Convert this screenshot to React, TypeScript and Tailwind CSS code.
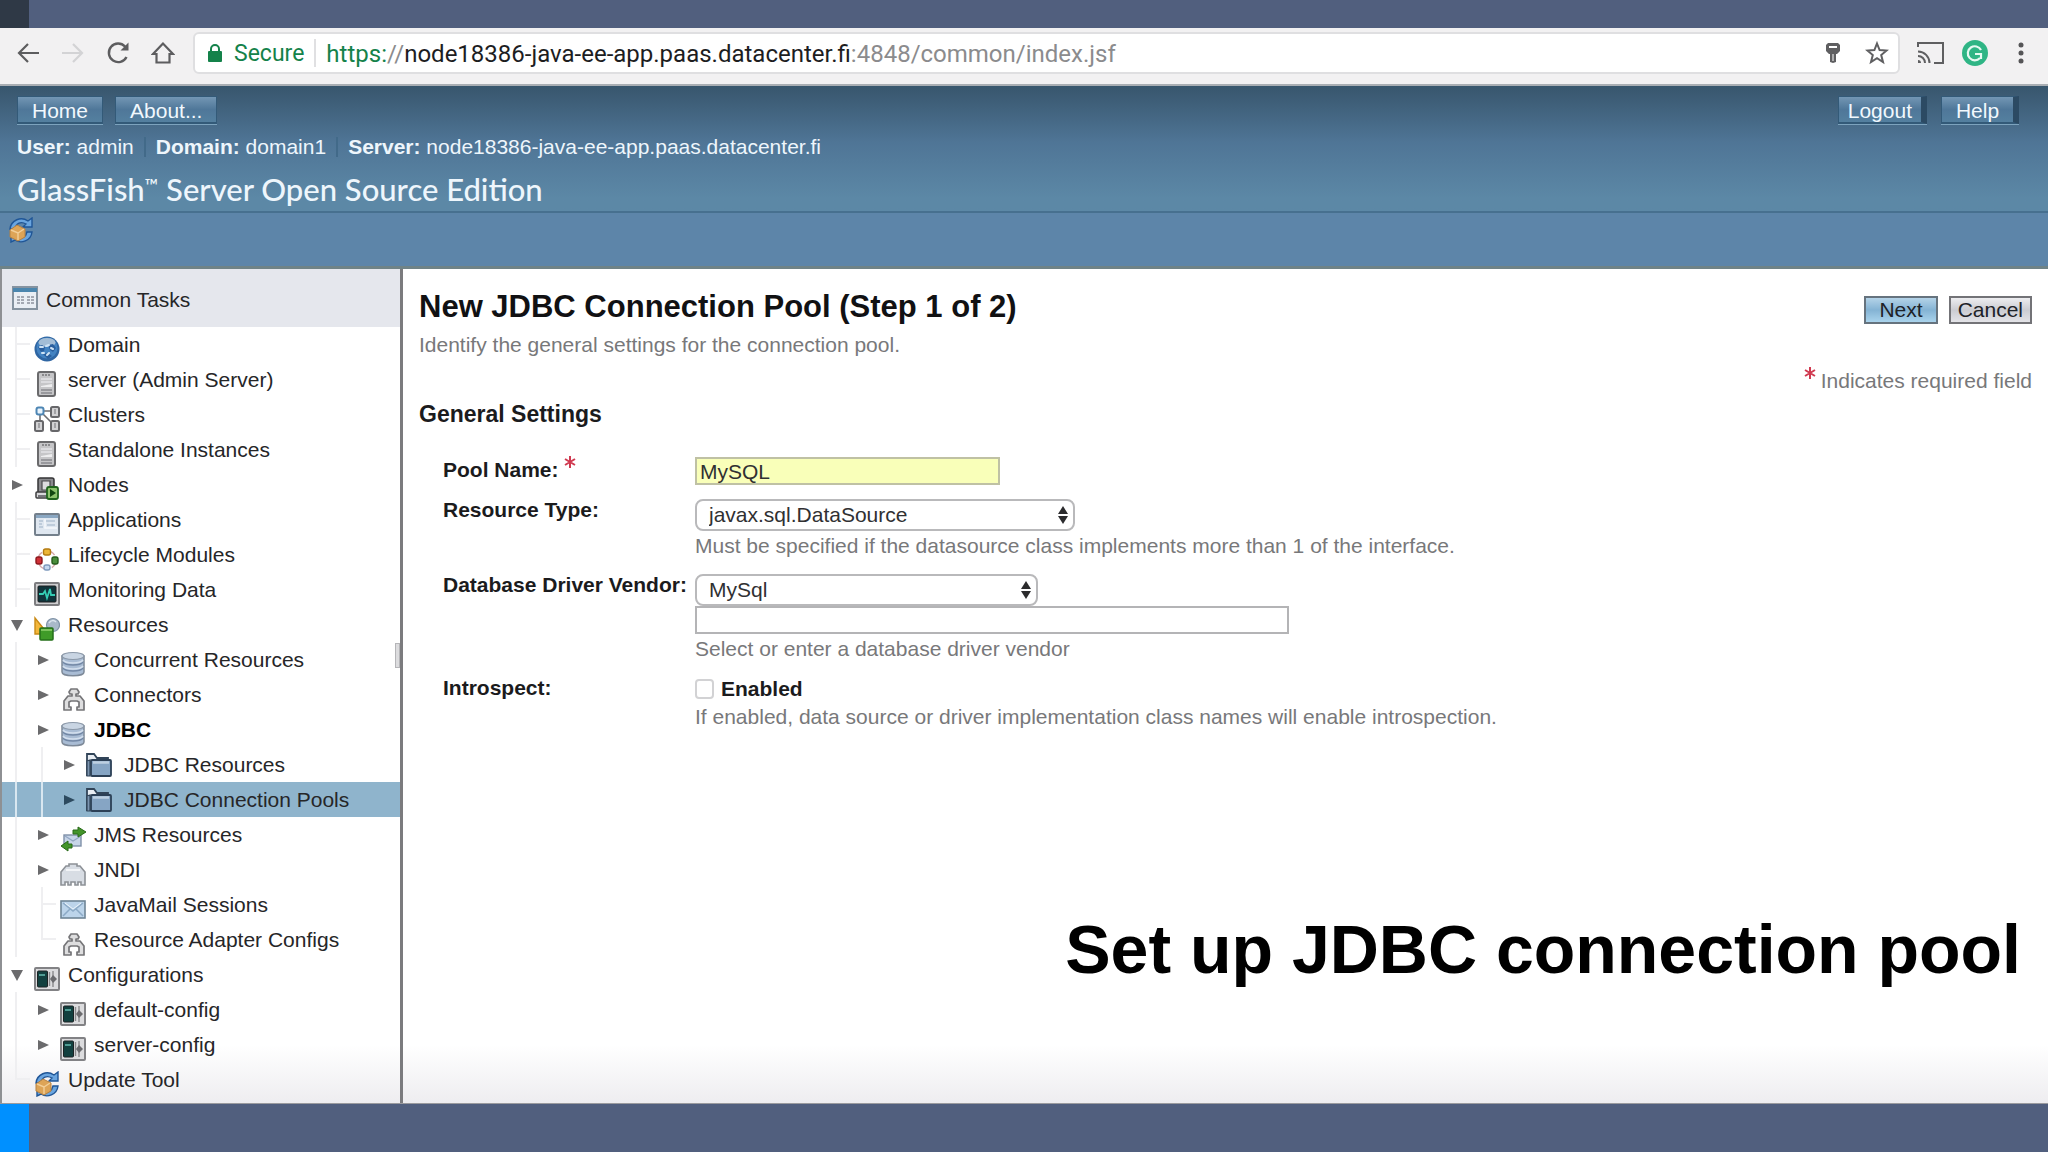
import type { ReactNode } from "react";

type IconName =
  | "globe"
  | "server"
  | "cluster"
  | "node"
  | "app"
  | "lifecycle"
  | "monitor"
  | "resources"
  | "database"
  | "connector"
  | "folder"
  | "jms"
  | "jndi"
  | "mail"
  | "config"
  | "update";

type TreeItem = {
  label: string;
  icon: IconName;
  level: 0 | 1 | 2;
  branch: "open" | "closed" | "tee" | "end";
  bold?: boolean;
  selected?: boolean;
};

const treeItems: TreeItem[] = [
  { label: "Domain", icon: "globe", level: 0, branch: "tee" },
  { label: "server (Admin Server)", icon: "server", level: 0, branch: "tee" },
  { label: "Clusters", icon: "cluster", level: 0, branch: "tee" },
  { label: "Standalone Instances", icon: "server", level: 0, branch: "tee" },
  { label: "Nodes", icon: "node", level: 0, branch: "closed" },
  { label: "Applications", icon: "app", level: 0, branch: "tee" },
  { label: "Lifecycle Modules", icon: "lifecycle", level: 0, branch: "tee" },
  { label: "Monitoring Data", icon: "monitor", level: 0, branch: "tee" },
  { label: "Resources", icon: "resources", level: 0, branch: "open" },
  { label: "Concurrent Resources", icon: "database", level: 1, branch: "closed" },
  { label: "Connectors", icon: "connector", level: 1, branch: "closed" },
  { label: "JDBC", icon: "database", level: 1, branch: "closed", bold: true },
  { label: "JDBC Resources", icon: "folder", level: 2, branch: "closed" },
  { label: "JDBC Connection Pools", icon: "folder", level: 2, branch: "closed", selected: true },
  { label: "JMS Resources", icon: "jms", level: 1, branch: "closed" },
  { label: "JNDI", icon: "jndi", level: 1, branch: "closed" },
  { label: "JavaMail Sessions", icon: "mail", level: 1, branch: "tee" },
  { label: "Resource Adapter Configs", icon: "connector", level: 1, branch: "end" },
  { label: "Configurations", icon: "config", level: 0, branch: "open" },
  { label: "default-config", icon: "config", level: 1, branch: "closed" },
  { label: "server-config", icon: "config", level: 1, branch: "closed" },
  { label: "Update Tool", icon: "update", level: 0, branch: "end" },
];

const drawings: Record<IconName, ReactNode> = {
  globe: (
    <>
      <circle cx="13" cy="13" r="12.5" fill="#2f66a3" />
      <circle cx="13" cy="12" r="10.5" fill="#4383c2" />
      <ellipse cx="13" cy="6.5" rx="8.5" ry="4.5" fill="#a3bdd6" />
      <path d="M4 11l4-2 3 2-1 4-3 1zM14 9l5-1 3 4-3 4-3-2zM9 18l5-1 4 3-4 3z" fill="#2a5f9e" />
      <path d="M6 11h3M12 10l3-1M17 12l2 1M8 17h2M15 17l-2 2" stroke="#cfe3f5" strokeWidth="2" strokeLinecap="round" fill="none" />
    </>
  ),
  server: (
    <>
      <rect x="4" y="1" width="17" height="24" rx="2" fill="#c6c6c8" stroke="#6a6a6c" strokeWidth="2" />
      <path d="M8 4h9" stroke="#77777a" strokeWidth="1.5" strokeDasharray="2 1" />
      <path d="M7 8h11M7 11h11" stroke="#e4e4e6" strokeWidth="1.5" />
      <path d="M7 15l11-2v3H7z" fill="#eeeeef" />
      <path d="M7 19h11M7 22h11" stroke="#8b8b8e" strokeWidth="1.5" />
    </>
  ),
  cluster: (
    <>
      <path d="M6 5h12M6 5v14M6 5l14 14" stroke="#6d6d70" strokeWidth="1.6" fill="none" />
      <rect x="2.5" y="1.5" width="7" height="7" rx="2" fill="#eaf4fc" stroke="#4e86b4" strokeWidth="2" />
      <rect x="17" y="1" width="8" height="10" rx="1.5" fill="#d2d2d4" stroke="#67676a" strokeWidth="2" />
      <rect x="1" y="15" width="8" height="10" rx="1.5" fill="#d2d2d4" stroke="#67676a" strokeWidth="2" />
      <rect x="17" y="15" width="8" height="10" rx="1.5" fill="#d2d2d4" stroke="#67676a" strokeWidth="2" />
      <path d="M21 3v5M5 17v5M21 17v5" stroke="#929295" strokeWidth="1.5" />
    </>
  ),
  node: (
    <>
      <path d="M6 2h12q2 0 2 2v13H4V4q0-2 2-2z" fill="#8b8b8e" stroke="#343436" strokeWidth="1.5" />
      <path d="M8 5h8v9H8z" fill="#dcdcde" stroke="#4a4a4c" strokeWidth="1.2" />
      <rect x="2" y="16" width="14" height="6" rx="1" fill="#d8d8da" stroke="#3c3c3e" strokeWidth="1.5" />
      <path d="M4 20h9" stroke="#55555a" strokeWidth="1.5" />
      <rect x="13" y="11" width="11" height="12" rx="2" fill="#8cc26c" stroke="#20641c" strokeWidth="1.8" />
      <path d="M16 13v8l6-4z" fill="#124710" />
    </>
  ),
  app: (
    <>
      <rect x="1" y="3" width="24" height="21" rx="1" fill="#dfe7f0" stroke="#74808c" strokeWidth="2" />
      <path d="M2 5.5h22" stroke="#8aa7c2" strokeWidth="3" />
      <path d="M5 10h4M5 13h3M5 16h4M12 10h9M13 14h8" stroke="#b4c3d3" strokeWidth="1.5" />
      <path d="M11 8v9h12" stroke="#f6f9fc" strokeWidth="1.5" fill="none" />
    </>
  ),
  lifecycle: (
    <>
      <circle cx="13" cy="14" r="9" fill="none" stroke="#d3a7aa" strokeWidth="1.4" strokeDasharray="9 5" />
      <rect x="9.5" y="3" width="7" height="6" rx="2" fill="#edb637" stroke="#b47b12" strokeWidth="1.4" />
      <rect x="2" y="11" width="6" height="7" rx="2" fill="#cf3036" stroke="#8d171c" strokeWidth="1.4" />
      <rect x="18" y="11" width="6" height="7" rx="2" fill="#4a8e3c" stroke="#245c1c" strokeWidth="1.4" />
      <rect x="10" y="19" width="6" height="5" rx="2" fill="#c4d8f0" stroke="#7e99bd" strokeWidth="1.4" />
    </>
  ),
  monitor: (
    <>
      <rect x="1" y="2" width="24" height="22" rx="1" fill="#cfcfd1" stroke="#7d7d80" strokeWidth="2" />
      <rect x="4" y="5" width="18" height="16" rx="1" fill="#10343b" stroke="#1d1f21" strokeWidth="1" />
      <path d="M5 13h4l2-3 2 7 3-9 1 6h4" fill="none" stroke="#35cdb4" strokeWidth="1.8" />
    </>
  ),
  resources: (
    <>
      <path d="M1 2l13 16H1z" fill="#f3b73b" stroke="#c98a16" strokeWidth="1.4" />
      <circle cx="19" cy="9" r="6.5" fill="#a9b9ca" stroke="#7f92a6" strokeWidth="1.2" />
      <path d="M15 7c2-3 5-3 7-1" stroke="#dde6ef" strokeWidth="1.5" fill="none" />
      <rect x="6" y="12" width="13" height="12" rx="1" fill="#3f9b28" stroke="#24701a" strokeWidth="1.5" />
      <path d="M7 14h11" stroke="#7dc45d" strokeWidth="2" />
    </>
  ),
  database: (
    <>
      <path d="M2 5v16c0 5 22 5 22 0V5z" fill="#a9bcd4" stroke="#7d8998" strokeWidth="1.5" />
      <path d="M3 11c3 4 17 4 20 0M3 17c3 4 17 4 20 0" fill="none" stroke="#7388a6" strokeWidth="1.4" />
      <path d="M3 9c3 4 17 4 20 0M3 15c3 4 17 4 20 0" fill="none" stroke="#d2deed" strokeWidth="1.6" />
      <ellipse cx="13" cy="5" rx="11" ry="3.5" fill="#c9d5e3" stroke="#8b98a8" strokeWidth="1.2" />
    </>
  ),
  connector: (
    <path
      d="M10 8L9 6l2-3h6l2 3-1 2h-2v2h4l4 5v9h-7v-3h2v-5l-2-1h-6l-2 1v5h2v3H4v-9l4-5h4V8z"
      fill="#dededf"
      stroke="#757578"
      strokeWidth="1.7"
      strokeLinejoin="round"
    />
  ),
  folder: (
    <>
      <path d="M1 24V2h7l3 4h11v5" fill="#e8edf3" stroke="#314458" strokeWidth="1.8" />
      <path d="M1 24V9l3-1v16z" fill="#7c95b0" stroke="#314458" strokeWidth="1.2" />
      <rect x="5" y="8" width="20" height="16" rx="1" fill="#86a5c4" stroke="#2c4056" strokeWidth="1.8" />
      <path d="M7 10.5h16" stroke="#bdd0e2" strokeWidth="2.5" />
    </>
  ),
  jms: (
    <>
      <rect x="4" y="9" width="17" height="11" fill="#c7d5e8" stroke="#7f90a8" strokeWidth="1.4" />
      <path d="M5 10l8 5 8-5" fill="none" stroke="#92a6c2" strokeWidth="1.2" />
      <path d="M13 4h5V1l8 5-8 5V8h-5z" fill="#43942a" stroke="#286a18" strokeWidth="1" />
      <path d="M12 18H8v-3l-7 5 7 5v-3h4z" fill="#43942a" stroke="#286a18" strokeWidth="1" />
    </>
  ),
  jndi: (
    <>
      <path
        d="M1 24V11l5-6h3V3h8v2h3l5 6v13h-4v-3h-3v3h-3v-3h-4v3H8v-3H5v3z"
        fill="#d8dde4"
        stroke="#8d9197"
        strokeWidth="1.6"
      />
      <path d="M6 9h14" stroke="#f2f4f7" strokeWidth="2" />
    </>
  ),
  mail: (
    <>
      <rect x="1" y="5" width="24" height="17" fill="#bcd4ea" stroke="#6f8596" strokeWidth="1.6" />
      <path d="M3 7l10 8L23 7M3 20l7-7M23 20l-7-7" fill="none" stroke="#8caac6" strokeWidth="1.5" />
      <path d="M5 7l8 6 8-6" fill="none" stroke="#edf5fb" strokeWidth="1" />
    </>
  ),
  config: (
    <>
      <rect x="1" y="2" width="24" height="22" rx="1" fill="#dcdcde" stroke="#828285" strokeWidth="2" />
      <rect x="3.5" y="5" width="10" height="16" rx="1" fill="#12403f" stroke="#1c2324" strokeWidth="1" />
      <path d="M5 9h6" stroke="#57a79d" strokeWidth="1.8" />
      <path d="M15.5 6v14M19 5v16" stroke="#8a8a8d" strokeWidth="1.4" />
      <path d="M19 9l4 4-4 4-3-4z" fill="#6b6b6e" />
    </>
  ),
  update: (
    <>
      <path d="M2 12C3 3 13-1 20 4l4-3v9h-9l3-3C13 4 8 6 7 12z" fill="#6aa5df" stroke="#1f5596" strokeWidth="1.4" />
      <path d="M24 15c-1 9-11 12-17 8l-4 2v-9h9l-3 4c5 2 9 0 10-5z" fill="#6aa5df" stroke="#1f5596" strokeWidth="1.4" />
      <path d="M2 13l7-5 8 4v8l-7 4-8-4z" fill="#dda457" stroke="#b58143" strokeWidth="1" />
      <path d="M3 13l7 3 6-4M10 16v7" fill="none" stroke="#f3cf98" strokeWidth="1.4" />
    </>
  ),
};

function TreeIcon({ name }: { name: IconName }) {
  return (
    <svg viewBox="0 0 26 26" className="size-[26px] shrink-0" aria-hidden="true">
      {drawings[name]}
    </svg>
  );
}

function Guide({ selected }: { selected?: boolean }) {
  return (
    <span className="flex w-[26px] shrink-0 self-stretch">
      <span className={`w-1/2 border-r-2 ${selected ? "border-[#d9e7f0]" : "border-[#efeff1]"}`} />
    </span>
  );
}

function Branch({ item }: { item: TreeItem }) {
  if (item.branch === "open" || item.branch === "closed") {
    return (
      <button
        type="button"
        aria-label={`Toggle ${item.label}`}
        className="flex w-[26px] shrink-0 items-center justify-center self-stretch"
      >
        <svg viewBox="0 0 12 12" className={item.selected ? "size-3 text-[#2d4a5f]" : "size-3 text-[#6b6b6d]"}>
          <path d={item.branch === "open" ? "M0 1h12L6 12z" : "M1 1l11 5-11 5z"} fill="currentColor" />
        </svg>
      </button>
    );
  }
  return (
    <span className="flex w-[26px] shrink-0 self-stretch">
      <span className={`w-1/2 border-r-2 border-[#efeff1] ${item.branch === "end" ? "h-1/2" : ""}`} />
      <span className="h-1/2 w-1/2 border-b-2 border-[#efeff1]" />
    </span>
  );
}

function TreeRow({ item }: { item: TreeItem }) {
  return (
    <li className={`flex h-[35px] items-center pl-0.5 ${item.selected ? "bg-[#8fb4cc]" : ""}`}>
      {item.level > 0 && <Guide selected={item.selected} />}
      {item.level > 1 && <Guide selected={item.selected} />}
      <Branch item={item} />
      <a href="#" className={`flex h-full items-center pl-1 ${item.level === 2 ? "gap-3" : "gap-2"}`}>
        <span className={item.level === 2 ? "" : "pt-2"}>
          <TreeIcon name={item.icon} />
        </span>
        <span className={`whitespace-nowrap ${item.bold ? "font-bold text-black" : ""}`}>{item.label}</span>
      </a>
    </li>
  );
}

function BrowserBar() {
  return (
    <div className="flex h-[58px] items-start border-b-2 border-[#a9aeb3] bg-[#f2f1f2] pt-1 pr-6 font-[Roboto,sans-serif]">
      <div className="flex h-[42px] w-[193px] shrink-0 items-center gap-[21px] pl-4 text-[#5d5d5f]">
        <button type="button" aria-label="Back">
          <svg viewBox="0 0 24 24" className="size-6" fill="none" stroke="currentColor" strokeWidth="2.2">
            <path d="M23 12H3M12 3l-9 9 9 9" />
          </svg>
        </button>
        <button type="button" aria-label="Forward" className="text-[#d3d3d5]">
          <svg viewBox="0 0 24 24" className="size-6" fill="none" stroke="currentColor" strokeWidth="2.2">
            <path d="M1 12h20M12 3l9 9-9 9" />
          </svg>
        </button>
        <button type="button" aria-label="Reload">
          <svg viewBox="0 0 24 24" className="size-6" fill="none" stroke="currentColor" strokeWidth="2.4">
            <path d="M20.5 16A9.3 9.3 0 1 1 19 5.5l2 2.5" />
            <path d="M22.5 1.5v8h-8z" fill="currentColor" stroke="none" />
          </svg>
        </button>
        <button type="button" aria-label="Home page">
          <svg viewBox="0 0 24 24" className="size-6" fill="none" stroke="currentColor" strokeWidth="2.2">
            <path d="M12 2.5L2 13h3.5v8.5h13V13H22z" />
          </svg>
        </button>
      </div>
      <div className="flex h-[42px] grow items-center rounded-md border-2 border-[#dfdfe1] bg-white pl-[13px] text-2xl leading-8">
        <svg viewBox="0 0 14 18" className="h-[18px] w-3.5 text-[#14824a]" aria-hidden="true">
          <path d="M3 8V5a4 4 0 0 1 8 0v3" fill="none" stroke="currentColor" strokeWidth="2" />
          <rect y="7" width="14" height="11" rx="1" fill="currentColor" />
        </svg>
        <span className="pt-0.5 pl-3 text-[23px] text-[#14824a]">Secure</span>
        <span className="mx-[10px] h-7 border-l-2 border-[#e0e0e2]" />
        <span className="grow pt-0.5 whitespace-nowrap text-[#8b8b8d]">
          <span className="text-[#14824a]">https:</span>//<span className="text-[#1d1d1f]">node18386-java-ee-app.paas.datacenter.fi</span>
          :4848/common/index.jsf
        </span>
        <button type="button" aria-label="Saved passwords" className="mr-6">
          <svg viewBox="0 0 16 20" className="h-5 w-4 text-[#5f5f61]">
            <path d="M3 0h10l2 2v6l-3 3h-1v8l-3 1-3-1v-8H4L1 8V2z" fill="currentColor" />
            <path d="M4 3h8v2H4z" fill="#fff" />
            <path d="M8 11v7" stroke="#fff" strokeWidth="1" />
          </svg>
        </button>
        <button type="button" aria-label="Bookmark" className="mr-[9px]">
          <svg viewBox="0 0 24 24" className="size-6 text-[#5f5f61]" fill="none" stroke="currentColor" strokeWidth="2">
            <path d="M12 2.5l2.6 6.6 7 .4-5.4 4.5 1.8 7-6-3.9-6 3.9 1.8-7L2.4 9.5l7-.4z" />
          </svg>
        </button>
      </div>
      <div className="flex h-[42px] items-center gap-[18px] pl-[17px]">
        <button type="button" aria-label="Cast">
          <svg viewBox="0 0 27 22" className="h-[22px] w-[27px] text-[#5f5f61]" fill="none" stroke="currentColor" strokeWidth="2">
            <path d="M1 5V1h25v20h-9M1 9.5A11.5 11.5 0 0 1 12.5 21M1 14a7 7 0 0 1 7 7" />
            <path d="M1 18a3 3 0 0 1 3 3H1z" fill="currentColor" stroke="none" />
          </svg>
        </button>
        <button type="button" aria-label="Grammar extension">
          <svg viewBox="0 0 26 26" className="size-[26px]" fill="none">
            <circle cx="13" cy="13" r="13" fill="#2fb585" />
            <path d="M19 10A7 7 0 1 0 18 18M13 14h6v5" stroke="#e6faf2" strokeWidth="2.2" />
          </svg>
        </button>
        <button type="button" aria-label="Menu" className="pl-3">
          <svg viewBox="0 0 6 22" className="h-[22px] w-1.5 text-[#555557]" fill="currentColor">
            <circle cx="3" cy="3" r="2.5" />
            <circle cx="3" cy="11" r="2.5" />
            <circle cx="3" cy="19" r="2.5" />
          </svg>
        </button>
      </div>
    </div>
  );
}

function HeaderButton({ label, wide }: { label: string; wide?: boolean }) {
  return (
    <button
      type="button"
      className={`h-7 border border-b-2 border-[#335a78] bg-linear-to-b from-[#7396b4] via-[#4f7799] to-[#54809f] text-[#f1f8fd] shadow-[0_1px_0_#7da3bd] ${
        wide ? "min-w-[78px] border-r-6 border-r-[#2c4a63] px-[9px]" : "px-[14px]"
      }`}
    >
      {label}
    </button>
  );
}

function Masthead() {
  return (
    <header className="border-b-3 border-[#6f8387] bg-[#5d85a9] leading-7 text-[#eef6fc]">
      <div className="h-[127px] border-b-2 border-[#47708f] bg-linear-to-b from-[#38566d] via-[#4f7596] via-45% to-[#5c88a6] to-90% px-[17px] pt-[10px]">
        <div className="flex gap-3">
          <HeaderButton label="Home" />
          <HeaderButton label="About..." />
          <div className="ml-auto flex gap-[14px] pr-3">
            <HeaderButton label="Logout" wide />
            <HeaderButton label="Help" wide />
          </div>
        </div>
        <div className="mt-[9px] flex h-7">
          <span>
            <b>User:</b> admin
          </span>
          <span className="mx-[10px] my-1 border-l-2 border-[#426a89]" />
          <span>
            <b>Domain:</b> domain1
          </span>
          <span className="mx-[10px] my-1 border-l-2 border-[#426a89]" />
          <span>
            <b>Server:</b> node18386-java-ee-app.paas.datacenter.fi
          </span>
        </div>
        <h1 className="mt-2.5 font-[Lato,sans-serif] text-[31px] leading-9 font-medium">
          GlassFish<sup className="text-lg">™</sup> Server Open Source Edition
        </h1>
      </div>
      <div className="h-[53px] pt-1 pl-2">
        <TreeIcon name="update" />
      </div>
    </header>
  );
}

function Sidebar() {
  return (
    <nav className="flex w-[403px] shrink-0 border-r-3 border-l-2 border-r-[#7b7b7e] border-l-[#8e9093]">
      <div className="grow text-[#262628]">
        <a href="#" className="flex h-[58px] items-center gap-2 bg-[#e5e7ed] pl-[10px]">
          <svg viewBox="0 0 26 24" className="h-6 w-[26px]" aria-hidden="true">
            <rect x="1" y="1" width="24" height="22" fill="#e9eef4" stroke="#8593a0" strokeWidth="2" />
            <path d="M1 2h24v4H1z" fill="#4b86ae" />
            <path d="M5 11h7M5 14h7M5 17h7M15 11h7M15 14h7M15 17h7" stroke="#a4a9b3" strokeWidth="2" strokeDasharray="3 1" />
          </svg>
          <span className="pt-1">Common Tasks</span>
        </a>
        <ul>
          {treeItems.map((item) => (
            <TreeRow key={item.label} item={item} />
          ))}
        </ul>
      </div>
      {/* splitter handle */}
      <div className="-ml-[5px] mt-[374px] h-[25px] w-[5px] border border-[#b5b5b8] bg-[#dcdcde]" />
    </nav>
  );
}

function Required() {
  return (
    <svg viewBox="0 0 12 12" className="size-3 text-[#d03a50]" stroke="currentColor" strokeWidth="2" role="img" aria-label="required">
      <path d="M6 0v12M1 3l10 6M11 3L1 9" />
    </svg>
  );
}

function Select({ id, value, width }: { id: string; value: string; width: string }) {
  return (
    <div className={`relative ${width}`}>
      <select
        id={id}
        defaultValue={value}
        className="h-8 w-full appearance-none rounded-lg border-2 border-[#b9b9bb] bg-white pl-3 leading-7 text-[#303032]"
      >
        <option>{value}</option>
      </select>
      <svg viewBox="0 0 10 20" className="pointer-events-none absolute top-1.5 right-[7px] h-5 w-2.5" fill="#2b2b2d" aria-hidden="true">
        <path d="M5 1l5 8H0zM5 19l5-8H0z" />
      </svg>
    </div>
  );
}

function Field({ label, htmlFor, required, children }: { label: string; htmlFor: string; required?: boolean; children: ReactNode }) {
  return (
    <div className="flex">
      <label htmlFor={htmlFor} className="flex w-[252px] shrink-0 items-start gap-[5px] font-bold whitespace-nowrap text-[#1b1b1d]">
        {label}
        {required && <Required />}
      </label>
      <div className="grow">{children}</div>
    </div>
  );
}

export default function App() {
  return (
    <div className="flex min-h-screen flex-col bg-[#515f7e] font-['Liberation_Sans',Arial,sans-serif] text-[21px]">
      <div className="h-7">
        <div className="h-7 w-[29px] bg-[#2f3946]" />
      </div>
      <BrowserBar />
      <Masthead />
      <div className="flex grow border-b border-[#9a9a9e] bg-linear-to-t from-[#eeedf0] to-white to-7%">
        <Sidebar />
        <main className="flex grow flex-col px-4 pt-5 leading-7 text-[#78787a]">
          <div className="flex justify-between">
            <div>
              <h2 className="text-[31px] leading-9 font-bold text-[#111113]">New JDBC Connection Pool (Step 1 of 2)</h2>
              <p className="mt-1.5">Identify the general settings for the connection pool.</p>
            </div>
            <div className="pt-[7px]">
              <div className="flex justify-end gap-[11px] leading-6 text-[#1d2228]">
                <button type="button" className="h-7 border-2 border-[#66737e] bg-linear-to-b from-[#b4d3e8] via-[#84b3d4] to-[#a9d3ec] px-[13px]">
                  Next
                </button>
                <button type="button" className="h-7 border-2 border-[#737377] bg-linear-to-b from-[#ededf0] via-[#cbccd2] to-[#e3e3e7] px-[7px]">
                  Cancel
                </button>
              </div>
              <p className="mt-[43px] flex justify-end gap-[5px]">
                <Required />
                Indicates required field
              </p>
            </div>
          </div>
          <h3 className="mt-[5px] text-[23px] font-bold text-[#1b1b1d]">General Settings</h3>
          <form className="mt-7 flex flex-col gap-[11px] pl-6">
            <Field label="Pool Name:" htmlFor="pool" required>
              <input
                id="pool"
                defaultValue="MySQL"
                className="mt-px block h-7 w-[305px] border-2 border-[#bfc1a4] bg-[#f9ffb9] pt-0.5 pl-[3px] text-[#303032]"
              />
            </Field>
            <Field label="Resource Type:" htmlFor="type">
              <div className="pt-[3px]">
                <Select id="type" value="javax.sql.DataSource" width="w-[380px]" />
                <p className="mt-px">Must be specified if the datasource class implements more than 1 of the interface.</p>
              </div>
            </Field>
            <Field label="Database Driver Vendor:" htmlFor="vendor">
              <div className="pt-[3px]">
                <Select id="vendor" value="MySql" width="w-[343px]" />
                <input aria-label="Other database driver vendor" className="block h-7 w-[594px] border-2 border-[#b4b4b6] bg-white px-1" />
                <p className="mt-px">Select or enter a database driver vendor</p>
              </div>
            </Field>
            <Field label="Introspect:" htmlFor="introspect">
              <label className="flex items-center gap-[7px] pt-px font-bold text-[#1b1b1d]">
                <input id="introspect" type="checkbox" className="h-5 w-[19px] appearance-none rounded border-2 border-[#d2d2d4] bg-white" />
                Enabled
              </label>
              <p>If enabled, data source or driver implementation class names will enable introspection.</p>
            </Field>
          </form>
          <p className="mt-auto mb-[114px] pr-[11px] text-right text-[68px] leading-20 font-bold text-black">Set up JDBC connection pool</p>
        </main>
      </div>
      <div className="h-12">
        <div className="h-12 w-[29px] bg-[#0090ff]" />
      </div>
    </div>
  );
}
